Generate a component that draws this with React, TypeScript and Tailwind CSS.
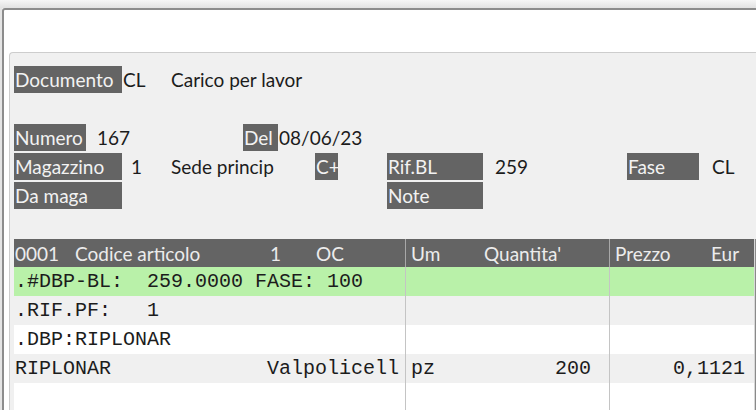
import React from "react";

const sans = { fontFamily: "Lato, 'Noto Sans', sans-serif" };
const mono = { fontFamily: "'Liberation Mono', 'DejaVu Sans Mono', monospace" };

function Label({ w, children }: { w: string; children: React.ReactNode }) {
  return (
    <div className={`${w} h-[27px] bg-[#646464] text-[#f2f2f2] pl-[1px] flex items-center shrink-0 leading-none`}>
      {children}
    </div>
  );
}

export default function App() {
  return (
    <div className="w-[756px] h-[410px] overflow-hidden flex flex-col bg-white text-[19px] text-[#1c1c1c]" style={sans}>
      <div className="h-[8px] bg-gradient-to-b from-[#f6f6f6] to-[#e2e2e2]" />
      <div className="flex-1 flex min-h-0">
        <div className="w-[2px] bg-[#e4e4e4]" />
        <div className="flex-1 flex flex-col border-l-2 border-t-2 border-[#8c8c8c] rounded-tl-[3px] bg-white min-w-0">
          <div className="h-[42px] shrink-0" />
          <div className="flex-1 ml-[5px] border-l border-t border-[#cdcdcd] rounded-tl-[4px] bg-[#f0f0f0] pl-[4px] pt-[13px] flex flex-col min-h-0">
            {/* Row 1 */}
            <div className="flex items-center h-[27px] leading-none">
              <Label w="w-[108px]">Documento</Label>
              <div className="w-[49px] pl-[1px]">CL</div>
              <div>Carico per lavor</div>
            </div>
            {/* Row 2 */}
            <div className="flex items-center h-[27px] mt-[31px] leading-none">
              <Label w="w-[72px]">Numero</Label>
              <div className="w-[157px] pl-[11px]">167</div>
              <Label w="w-[35px]">Del</Label>
              <div className="pl-[1px]">08/06/23</div>
            </div>
            {/* Row 3 */}
            <div className="flex items-center h-[27px] mt-[2px] leading-none">
              <Label w="w-[108px]">Magazzino</Label>
              <div className="w-[49px] pl-[9px]">1</div>
              <div className="w-[144px]">Sede princip</div>
              <Label w="w-[23px]">C+</Label>
              <div className="w-[49px]" />
              <Label w="w-[96px]">Rif.BL</Label>
              <div className="w-[144px] pl-[12px]">259</div>
              <Label w="w-[72px]">Fase</Label>
              <div className="pl-[13px]">CL</div>
            </div>
            {/* Row 4 */}
            <div className="flex items-center h-[27px] mt-[2px] leading-none">
              <Label w="w-[108px]">Da maga</Label>
              <div className="w-[265px]" />
              <Label w="w-[96px]">Note</Label>
            </div>

            {/* Table */}
            <div className="mt-[30px] flex flex-col">
              <div className="flex h-[28px] bg-[#646464] text-[#ececec] leading-none">
                <div className="w-[392px] shrink-0 border-r border-[#a8a8a8] flex items-center pl-[1px]">
                  <span className="w-[60px]">0001</span>
                  <span className="w-[195px]">Codice articolo</span>
                  <span className="w-[46px]">1</span>
                  <span>OC</span>
                </div>
                <div className="w-[204px] shrink-0 border-r border-[#a8a8a8] flex items-center pl-[5px]">
                  <span className="w-[73px]">Um</span>
                  <span>Quantita'</span>
                </div>
                <div className="w-[145px] shrink-0 border-r border-[#d8d8d8] flex items-center pl-[5px]">
                  <span className="w-[96px]">Prezzo</span>
                  <span>Eur</span>
                </div>
                <div className="flex-1 bg-[#8a8a8a]" />
              </div>

              {[
                { bg: "bg-[#b9f1a9]", c1: ".#DBP-BL:  259.0000 FASE: 100", um: "", q: "", p: "" },
                { bg: "bg-[#f0f0f0]", c1: ".RIF.PF:   1", um: "", q: "", p: "" },
                { bg: "bg-white", c1: ".DBP:RIPLONAR", um: "", q: "", p: "" },
                { bg: "bg-[#f0f0f0]", c1: "RIPLONAR             Valpolicell", um: "pz", q: "200", p: "0,1121" },
                { bg: "bg-white", c1: "", um: "", q: "", p: "" },
              ].map((r, i) => (
                <div key={i} className={`flex h-[29px] ${r.bg} text-[20px] leading-none text-[#1c1c1c]`} style={mono}>
                  <div className="w-[392px] shrink-0 border-r border-[#c4c4c4] flex items-center pl-[1px] overflow-hidden whitespace-pre">
                    {r.c1}
                  </div>
                  <div className="w-[204px] shrink-0 border-r border-[#c4c4c4] flex items-center justify-between pl-[5px] pr-[18px] whitespace-pre">
                    <span>{r.um}</span>
                    <span>{r.q}</span>
                  </div>
                  <div className="w-[145px] shrink-0 border-r border-[#d8d8d8] flex items-center justify-end pr-[9px] whitespace-pre">
                    {r.p}
                  </div>
                  <div className="flex-1 bg-[#8a8a8a]" />
                </div>
              ))}
            </div>
          </div>
        </div>
      </div>
    </div>
  );
}
